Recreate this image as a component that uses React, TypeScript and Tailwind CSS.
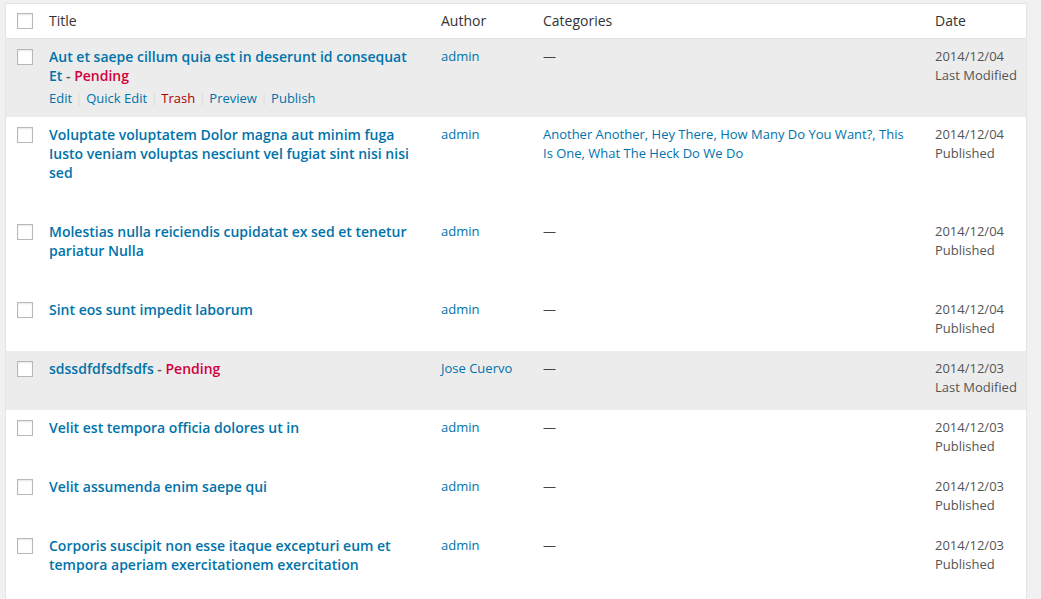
import React from "react";

type Row = {
  title: string;
  pending?: boolean;
  author: string;
  cats: string[] | null;
  date: string;
  status: string;
  grey?: boolean;
  actions?: boolean;
};

const rows: Row[] = [
  { title: "Aut et saepe cillum quia est in deserunt id consequat Et", pending: true, author: "admin", cats: null, date: "2014/12/04", status: "Last Modified", grey: true, actions: true },
  { title: "Voluptate voluptatem Dolor magna aut minim fuga Iusto veniam voluptas nesciunt vel fugiat sint nisi nisi sed", author: "admin", cats: ["Another Another", "Hey There", "How Many Do You Want?", "This Is One", "What The Heck Do We Do"], date: "2014/12/04", status: "Published" },
  { title: "Molestias nulla reiciendis cupidatat ex sed et tenetur pariatur Nulla", author: "admin", cats: null, date: "2014/12/04", status: "Published" },
  { title: "Sint eos sunt impedit laborum", author: "admin", cats: null, date: "2014/12/04", status: "Published" },
  { title: "sdssdfdfsdfsdfs", pending: true, author: "Jose Cuervo", cats: null, date: "2014/12/03", status: "Last Modified", grey: true },
  { title: "Velit est tempora officia dolores ut in", author: "admin", cats: null, date: "2014/12/03", status: "Published" },
  { title: "Velit assumenda enim saepe qui", author: "admin", cats: null, date: "2014/12/03", status: "Published" },
  { title: "Corporis suscipit non esse itaque excepturi eum et tempora aperiam exercitationem exercitation", author: "admin", cats: null, date: "2014/12/03", status: "Published" },
];

function Checkbox() {
  return (
    <div className="w-4 h-4 bg-white border border-[#b4b9be] shadow-[inset_0_1px_2px_rgba(0,0,0,0.1)]" />
  );
}

function Sep() {
  return <span className="text-[#ddd] mx-[3.5px]">|</span>;
}

export default function App() {
  return (
    <div
      className="w-[1041px] h-[599px] overflow-hidden bg-[#f1f1f1] pt-[3px] pl-[5px]"
      style={{ fontFamily: '"Open Sans", "Liberation Sans", sans-serif' }}
    >
      <div className="w-[1022px] bg-white border border-[#e5e5e5] shadow-[0_1px_1px_rgba(0,0,0,0.04)]">
        {/* Header */}
        <div className="flex h-[35px] items-center border-b border-[#e1e1e1] text-[14px] text-[#333]">
          <div className="w-[33px] pl-[11px] flex items-center">
            <Checkbox />
          </div>
          <div className="w-[392px] px-[10px] pb-[2px]">Title</div>
          <div className="w-[102px] px-[10px] pb-[2px]">Author</div>
          <div className="w-[392px] px-[10px] pb-[2px]">Categories</div>
          <div className="w-[101px] px-[10px] pb-[2px]">Date</div>
        </div>
        {rows.map((r, i) => (
          <div key={i} className={`flex items-start ${r.grey ? "bg-[#ececec]" : "bg-white"}`}>
            <div className="w-[33px] pl-[11px] pt-[10px] shrink-0">
              <Checkbox />
            </div>
            <div className="w-[392px] shrink-0 px-[10px] pt-[8px] pb-[9px]">
              <div className="text-[14px] leading-[19px] font-semibold text-[#0073aa]">
                {r.title}
                {r.pending && (
                  <>
                    <span className="text-[#555]"> - </span>
                    <span className="text-[#d2003c]">Pending</span>
                  </>
                )}
              </div>
              <div className={`h-[23px] pt-[4px] text-[13px] leading-[19px] whitespace-nowrap ${r.actions ? "visible" : "invisible"}`}>
                <span className="text-[#0073aa]">Edit</span>
                <Sep />
                <span className="text-[#0073aa]">Quick Edit</span>
                <Sep />
                <span className="text-[#a00]">Trash</span>
                <Sep />
                <span className="text-[#0073aa]">Preview</span>
                <Sep />
                <span className="text-[#0073aa]">Publish</span>
              </div>
            </div>
            <div className="w-[102px] shrink-0 px-[10px] pt-[8px] text-[13px] leading-[19px] text-[#0073aa] whitespace-nowrap">
              {r.author}
            </div>
            <div className="w-[392px] shrink-0 px-[10px] pt-[8px] text-[13px] leading-[19px] text-[#444]">
              {r.cats ? (
                r.cats.map((c, j) => (
                  <React.Fragment key={j}>
                    <span className="text-[#0073aa]">{c}</span>
                    {j < r.cats!.length - 1 && <span className="text-[#0073aa]">, </span>}
                  </React.Fragment>
                ))
              ) : (
                <span>—</span>
              )}
            </div>
            <div className="w-[101px] shrink-0 px-[10px] pt-[8px] text-[13px] leading-[19px] text-[#555] whitespace-nowrap">
              <div>{r.date}</div>
              <div>{r.status}</div>
            </div>
          </div>
        ))}
      </div>
    </div>
  );
}
